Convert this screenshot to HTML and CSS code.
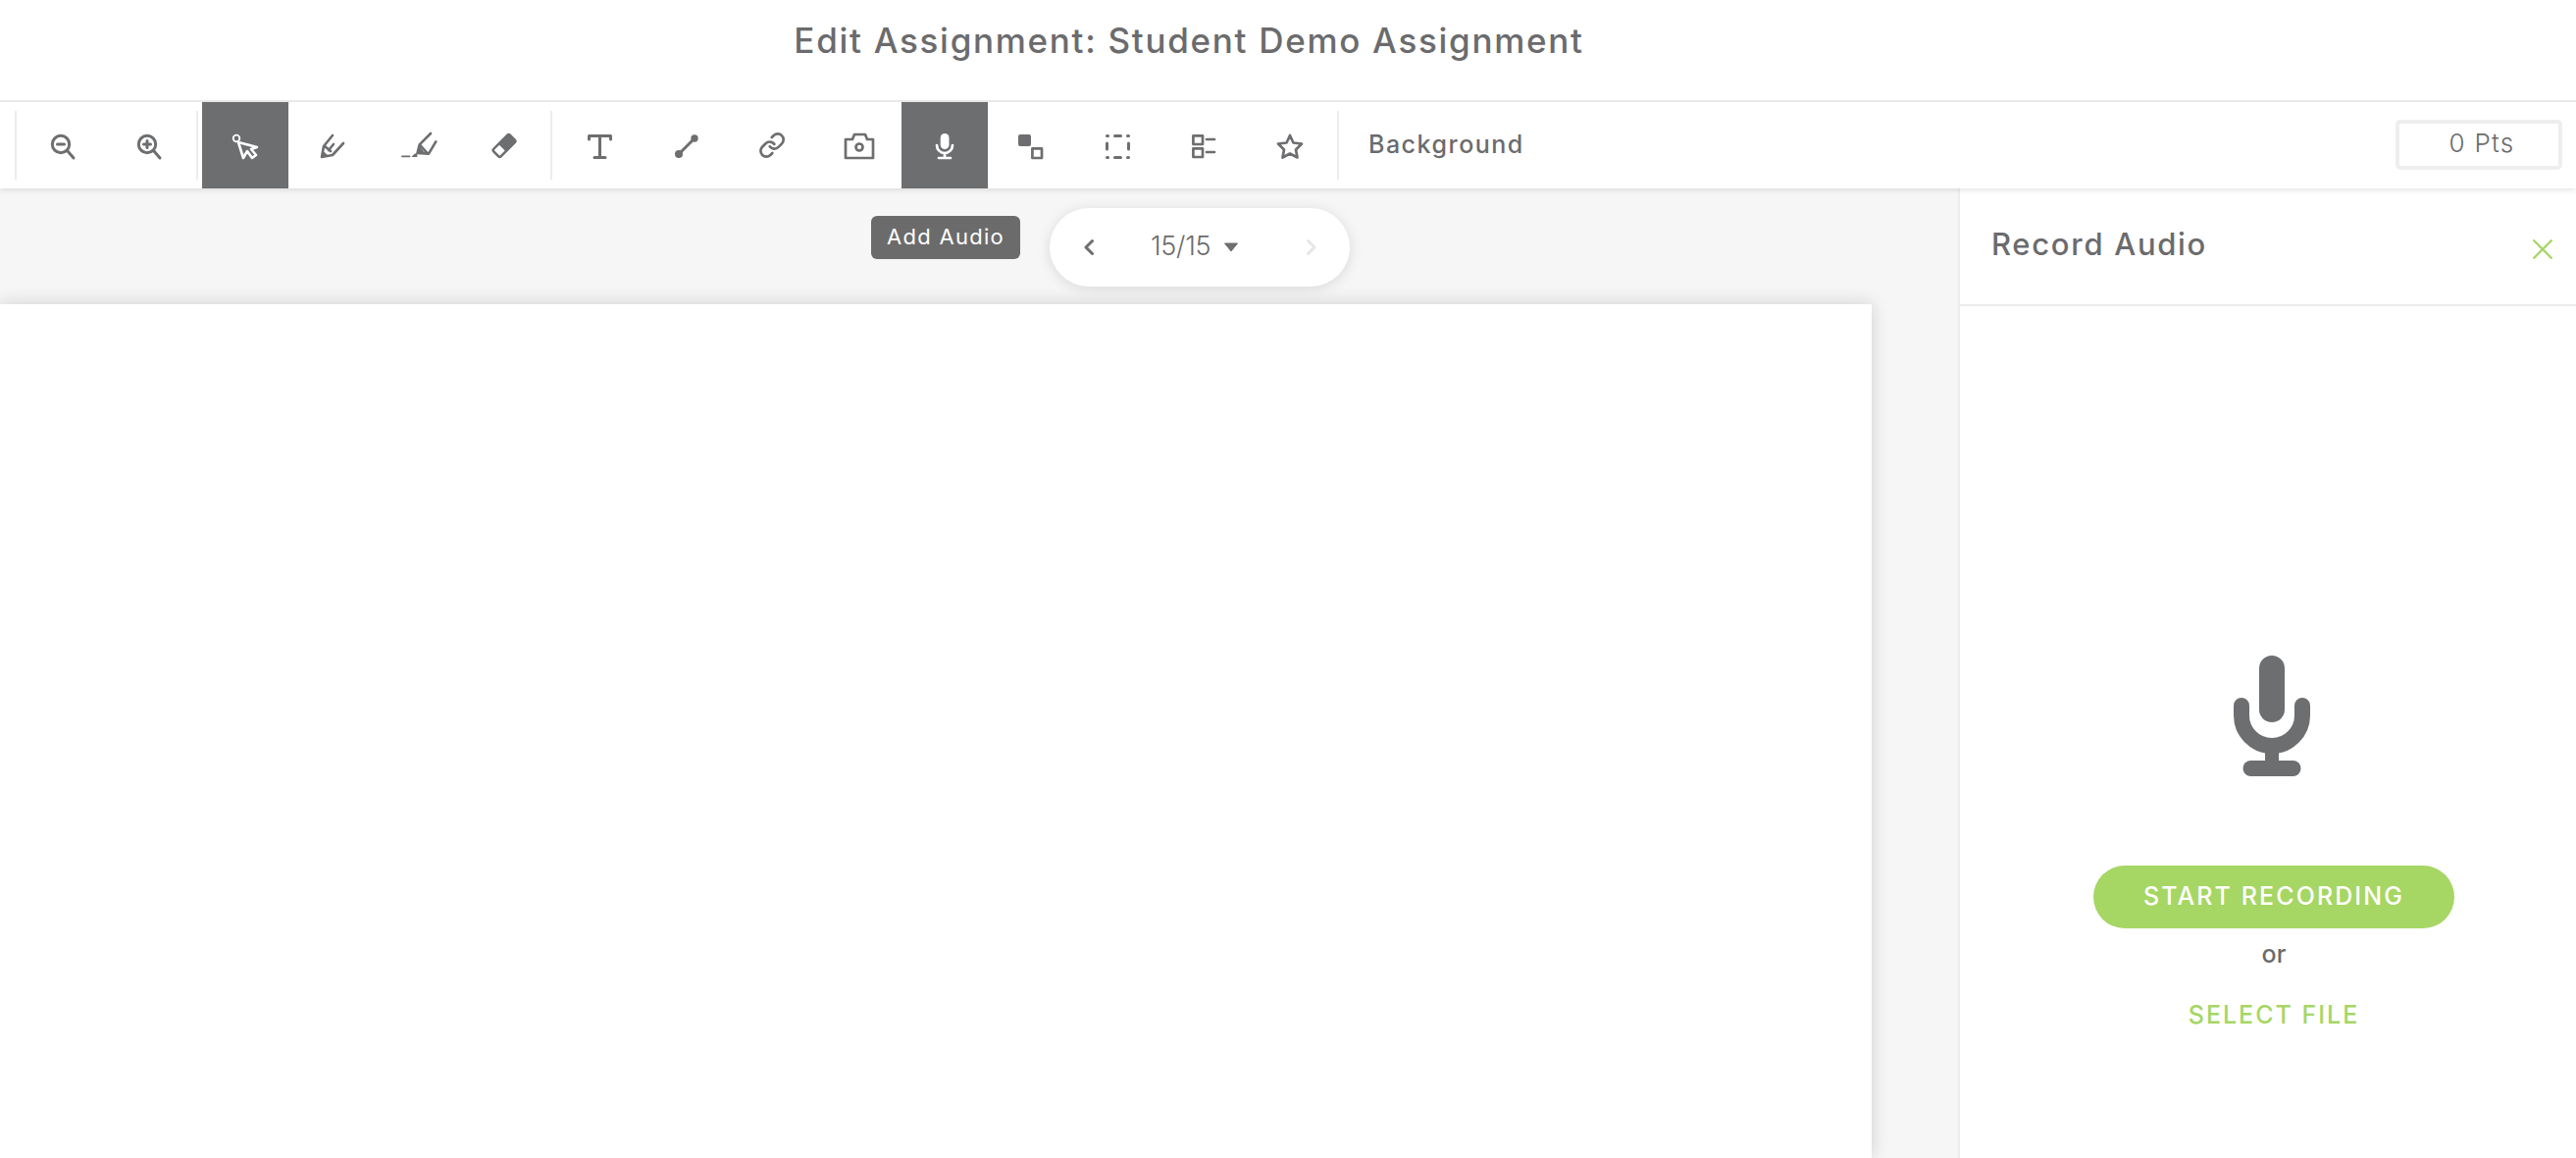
FILE: index.html
```html
<!DOCTYPE html>
<html lang="en">
<head>
<meta charset="utf-8">
<title>Edit Assignment</title>
<link rel="stylesheet" href="styles.css">
</head>
<body>
<div class="app">
  <header class="title-bar"><h1 class="title">Edit Assignment: Student Demo Assignment</h1></header>
  <nav class="toolbar">
    <span class="divider"></span>
    <div class="group group-zoom">
      <button class="tool"><svg class="icon" viewBox="0 0 40 40"><circle cx="18" cy="19" r="8.7"/><path d="M25 26l6 7M14.5 19h7"/></svg></button>
      <button class="tool"><svg class="icon" viewBox="0 0 40 40"><circle cx="18" cy="19" r="8.7"/><path d="M25 26l6 7M14.5 19h7M18 15.5v7"/></svg></button>
    </div>
    <span class="divider"></span>
    <div class="group group-draw">
      <button class="tool active"><svg class="icon" viewBox="0 0 40 40"><circle class="thin" cx="11" cy="13" r="3.3"/><path class="mid" d="M13 17l19 5-6 2 5 6-4 3-5-7-4 7z"/></svg></button>
      <button class="tool"><svg class="icon" viewBox="0 0 40 40"><path class="mid" d="M21 10l-9 11-2 11 11-2 11-12M13 21l6 5M17 25l5-6"/><path class="solid" d="M9.500 33l2-7 5 4.500z"/></svg></button>
      <button class="tool"><svg class="icon" viewBox="0 0 40 40"><path class="thin" d="M4 31.300h7.500"/><path class="solid" d="M13.300 32l3.500-3.500h2.500v3.500z"/><path class="mid" d="M33 8L21.700 19.300 19.500 28l11.500.7 7.300-12.400M21.700 19.300l8.300 9.400"/><path class="solid" d="M21.700 21l-1.700 7h7z"/></svg></button>
      <button class="tool"><svg class="icon" viewBox="0 0 40 40"><g transform="rotate(45 20 20.500)"><rect class="solid" x="13.500" y="7.500" width="13" height="26" rx="3"/><rect class="cut" x="16" y="23.500" width="8" height="7.500"/></g></svg></button>
    </div>
    <span class="divider"></span>
    <div class="group group-insert">
      <button class="tool"><svg class="icon" viewBox="0 0 40 40"><path d="M9.500 14v-3.500h22V14M20.500 10.500v22M15 32.500h11"/></svg></button>
      <button class="tool"><svg class="icon" viewBox="0 0 40 40"><path d="M13 29l16-16"/><circle class="solid" cx="13" cy="29" r="4"/><circle class="solid" cx="29" cy="13" r="3.700"/></svg></button>
      <button class="tool"><svg class="icon" viewBox="0 0 40 40"><g class="link" transform="translate(6 6) scale(1.170)"><path d="M10 13a5 5 0 0 0 7.540.540l3-3a5 5 0 0 0-7.070-7.070l-1.720 1.710"/><path d="M14 11a5 5 0 0 0-7.540-.540l-3 3a5 5 0 0 0 7.070 7.070l1.710-1.710"/></g></svg></button>
      <button class="tool"><svg class="icon" viewBox="0 0 40 40"><path class="thin2" d="M7 14h7l2-5h11l2 5h6v19H7z"/><circle class="thin2" cx="21" cy="22" r="3.500"/></svg></button>
      <button class="tool active"><svg class="icon" viewBox="0 0 40 40"><rect class="solid" x="15.700" y="8" width="8.800" height="16" rx="4.400"/><path class="thin2" d="M12 20a8 8 0 0 0 16 0M20 28v5M14 33h12"/></svg></button>
      <button class="tool"><svg class="icon" viewBox="0 0 40 40"><rect class="solid" x="7" y="9" width="13" height="12" rx="2"/><rect class="thin2" x="21.400" y="23.400" width="9.600" height="9.600"/></svg></button>
      <button class="tool"><svg class="icon" viewBox="0 0 40 40"><path d="M9.500 10.500h1M17.500 10.500h6M30.500 10.500h1M9.500 18v6M31.500 18v6M9.500 32.500h1M17.500 32.500h6M30.500 32.500h1"/></svg></button>
      <button class="tool"><svg class="icon" viewBox="0 0 40 40"><rect class="thin2" x="9.400" y="10.400" width="9.600" height="8.600"/><rect class="thin2" x="9.400" y="23.400" width="9.600" height="8.600"/><path class="thin2" d="M23 14h8M23 27h8"/></svg></button>
      <button class="tool"><svg class="icon" viewBox="0 0 40 40"><path class="thin2" d="M20 10l3.500 7.500 8.500 1-6 6 1.500 8-7.500-4-7.500 4 1.500-8-6-6 8.500-1z"/></svg></button>
    </div>
    <span class="divider"></span>
    <span class="bg-label">Background</span>
    <span class="points">0 Pts</span>
  </nav>
  <div class="main">
    <section class="stage">
      <div class="tooltip">Add Audio</div>
      <div class="pager">
        <svg class="chev" viewBox="0 0 12 18"><path d="M9.500 2.500L3 9l6.500 6.500"/></svg>
        <span class="page-num">15/15</span>
        <svg class="caret" viewBox="0 0 16 10"><path d="M1.500 1h13L8 9z"/></svg>
        <svg class="chev chev-off" viewBox="0 0 12 18"><path d="M2.500 2.500L9 9l-6.500 6.500"/></svg>
      </div>
      <div class="sheet"></div>
    </section>
    <aside class="panel">
      <div class="panel-head">
        <h2 class="panel-title">Record Audio</h2>
        <svg class="close" viewBox="0 0 22 22"><path d="M1.500 1.500l19 19M20.500 1.500l-19 19"/></svg>
      </div>
      <div class="panel-body">
        <svg class="big-mic" viewBox="0 0 78 123"><rect x="26" y="0" width="26" height="68" rx="13"/><path class="arc" d="M8 51v10a31 31 0 0 0 62 0V51"/><path d="M32 95h14v16H32z"/><rect x="9.500" y="107" width="59" height="16" rx="8"/></svg>
        <button class="record">START RECORDING</button>
        <span class="or">or</span>
        <span class="select">SELECT FILE</span>
      </div>
    </aside>
  </div>
</div>
</body>
</html>
```
FILE: styles.css
```css
* { box-sizing: border-box; }
html, body { margin: 0; height: 100%; overflow: hidden; background: #fff; }
body { font-family: "Inter", "Liberation Sans", sans-serif; color: #6b6b6d; }
.app { display: flex; flex-direction: column; height: 1180px; width: 2626px; }

.title-bar { height: 104px; border-bottom: 2px solid #ececec; display: flex; justify-content: center; padding-right: 202px; flex: none; }
.title { margin: 20px 0 0; font-size: 35px; line-height: 42px; font-weight: 500; letter-spacing: 1.7px; }

.toolbar { height: 88px; flex: none; display: flex; align-items: center; padding-left: 15px; background: #fff; position: relative; z-index: 2; box-shadow: 0 2px 5px rgba(0,0,0,.10); }
.divider { width: 2px; height: 70px; background: #ececec; flex: none; }
.group { display: flex; }
.group-zoom { margin: 0 4px 0 3px; }
.group-draw { margin: 0 3px 0 4px; }
.group-insert { margin: 0 4px; }
.tool { width: 88px; height: 88px; padding: 0; border: 0; background: transparent; display: flex; align-items: center; justify-content: center; color: #6d6e70; }
.tool.active { background: #6d6e70; color: #fff; }
.icon { width: 40px; height: 40px; fill: none; stroke: currentColor; stroke-width: 3; stroke-linecap: round; stroke-linejoin: round; }
.icon .thin { stroke-width: 1.8; }
.icon .mid { stroke-width: 2.6; }
.icon .thin2 { stroke-width: 2.7; }
.icon .solid { fill: currentColor; stroke: none; }
.icon .cut { fill: #fff; stroke: none; }
.icon .link { stroke-width: 2.300; }
.bg-label { margin: 0 0 3px 30px; font-size: 25px; font-weight: 500; letter-spacing: 1.5px; }
.points { margin-left: auto; margin-right: 14px; width: 170px; height: 51px; margin-top: -2px; border: 4px solid #eeeeee; border-radius: 5px; display: flex; align-items: center; justify-content: center; font-size: 26px; font-weight: 300; letter-spacing: 1.3px; padding: 0 0 4px 6px; }

.main { flex: 1; display: flex; min-height: 0; }
.stage { flex: 1; background: #f6f6f6; position: relative; padding: 118px 88px 0 0; overflow: hidden; }
.sheet { height: 100%; background: #fff; box-shadow: 0 0 18px rgba(0,0,0,.16); }
.tooltip { position: absolute; left: 888px; top: 28px; width: 152px; height: 44px; background: #6b6b6b; color: #fff; border-radius: 6px; display: flex; align-items: center; justify-content: center; font-size: 22px; letter-spacing: 1.3px; padding-bottom: 3px; z-index: 1; }
.pager { position: absolute; left: 1070px; top: 20px; width: 306px; height: 80px; background: #fff; border-radius: 40px; box-shadow: 0 2px 14px rgba(0,0,0,.12); display: flex; align-items: center; padding-left: 34px; z-index: 1; }
.chev { width: 12px; height: 18px; fill: none; stroke: #6d6e70; stroke-width: 3; stroke-linecap: round; stroke-linejoin: round; flex: none; }
.chev-off { stroke: #e6e6e6; margin-left: 68px; }
.page-num { margin: 0 0 3px 57px; font-size: 27px; font-weight: 300; letter-spacing: -.3px; }
.caret { width: 16px; height: 10px; margin-left: 13px; fill: #6d6e70; stroke: #6d6e70; stroke-linejoin: round; flex: none; }

.panel { width: 630px; flex: none; background: #fff; border-left: 2px solid #ececec; display: flex; flex-direction: column; }
.panel-head { height: 120px; flex: none; border-bottom: 2px solid #ececec; display: flex; align-items: center; justify-content: space-between; padding: 0 23px 0 32px; }
.panel-title { margin: 0 0 6px; font-size: 31px; font-weight: 500; letter-spacing: 1.7px; }
.close { width: 22px; height: 22px; margin-top: 6px; fill: none; stroke: #a6d664; stroke-width: 2.300; }
.panel-body { display: flex; flex-direction: column; align-items: center; padding: 356px 0 0 12px; }
.big-mic { width: 78px; height: 123px; fill: #6d6e70; flex: none; margin-left: -4px; }
.big-mic .arc { fill: none; stroke: #6d6e70; stroke-width: 16; stroke-linecap: round; }
.record { margin-top: 91px; width: 368px; height: 64px; border: 0; border-radius: 32px; background: #a6d664; color: #fff; font-family: inherit; font-size: 25px; font-weight: 500; letter-spacing: 2.1px; padding: 0 0 3px; }
.or { margin-top: 9px; font-size: 25px; line-height: 34px; font-weight: 500; }
.select { margin-top: 30px; color: #a6d664; font-size: 25px; line-height: 30px; font-weight: 500; letter-spacing: 2px; }
```
